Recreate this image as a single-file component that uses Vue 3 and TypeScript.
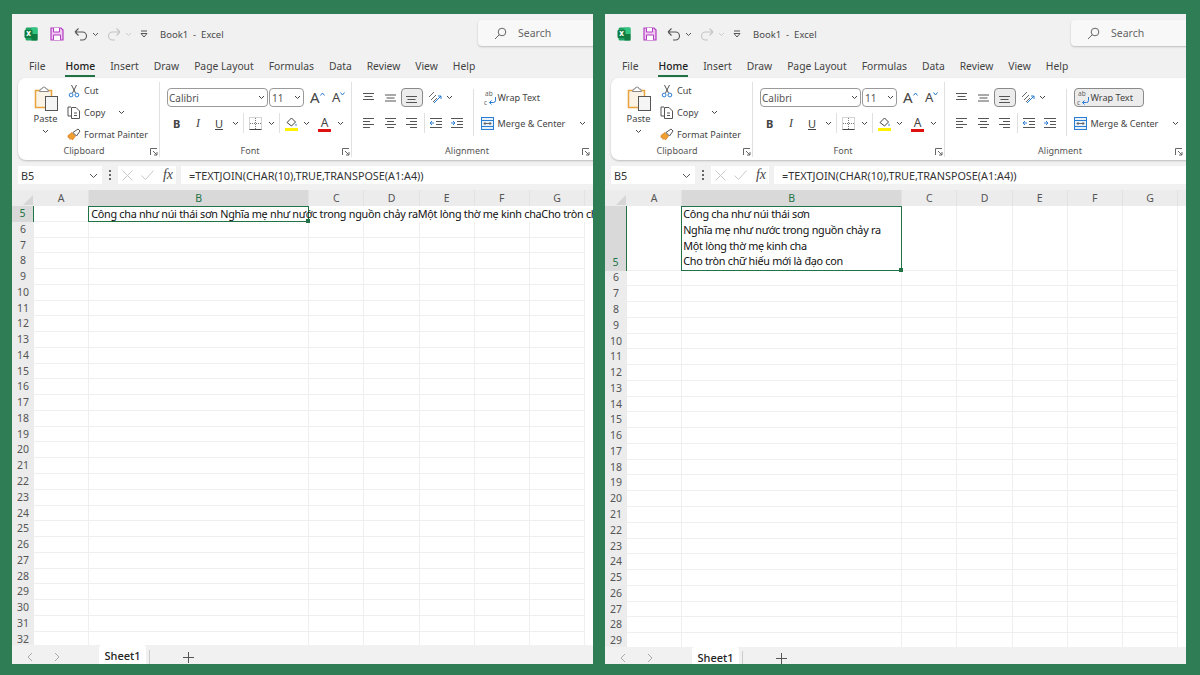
<script setup lang="ts">
interface Win {
  id: string
  wrapped: boolean
  lastRow: number
}
const windows: Win[] = [
  { id: 'before', wrapped: false, lastRow: 32 },
  { id: 'after', wrapped: true, lastRow: 29 },
]
const tabs = ['File', 'Home', 'Insert', 'Draw', 'Page Layout', 'Formulas', 'Data', 'Review', 'View', 'Help']
const cols = ['A', 'B', 'C', 'D', 'E', 'F', 'G']
const lines = [
  'Công cha như núi thái sơn',
  'Nghĩa mẹ như nước trong nguồn chảy ra',
  'Một lòng thờ mẹ kinh cha',
  'Cho tròn chữ hiếu mới là đạo con',
]
const oneLine = 'Công cha như núi thái sơn Nghĩa mẹ như nước trong nguồn chảy raMột lòng thờ mẹ kinh chaCho tròn chữ hiếu mới là đạo con'
function rowsOf(w: Win): number[] {
  const out: number[] = []
  for (let r = 5; r <= w.lastRow; r++) out.push(r)
  return out
}
</script>

<template>
  <div class="page">
    <section v-for="w in windows" :key="w.id" class="win" :class="{ wrapped: w.wrapped }">
      <header class="titlebar">
        <svg class="ic logo" width="14" height="14" viewBox="0 0 14 14">
          <rect x="1.5" y="0.5" width="12" height="13" rx="1.5" fill="#21a366" />
          <rect x="7.5" y="0.5" width="6" height="6.5" fill="#33c481" />
          <rect x="7.5" y="7" width="6" height="6.5" fill="#107c41" />
          <rect x="0.5" y="3" width="8" height="8" rx="1" fill="#107c41" />
          <text x="4.5" y="9.2" text-anchor="middle" font-size="8" font-weight="700" fill="#fff">x</text>
        </svg>
        <svg class="ic save" width="14" height="14" viewBox="0 0 14 14">
          <path d="M1 1h10l2 2v10H1z" fill="#f0c8f2" stroke="#b13fc1" stroke-width="1.2" />
          <path d="M3.5 1v4h6V1" fill="#fff" stroke="#b13fc1" />
          <path d="M3.5 13V8h7v5" fill="#fff" stroke="#b13fc1" />
        </svg>
        <svg class="ic undo" width="14" height="14" viewBox="0 0 14 14" fill="none" stroke="#555" stroke-width="1.1">
          <path d="M1 5h7.500a4 4 0 0 1 0 8H6M1 5l3.500-3.500M1 5l3.500 3.500" />
        </svg>
        <svg class="chev c-undo" width="7" height="5" viewBox="0 0 7 5"><path d="M1 1l2.500 2.500L6 1" fill="none" stroke="#555" /></svg>
        <svg class="ic redo" width="14" height="14" viewBox="0 0 14 14" fill="none" stroke="#c4c4c4" stroke-width="1.1">
          <path d="M13 5H5.500a4 4 0 0 0 0 8H8M13 5L9.500 1.500M13 5L9.500 8.500" />
        </svg>
        <svg class="chev c-redo" width="7" height="5" viewBox="0 0 7 5"><path d="M1 1l2.500 2.500L6 1" fill="none" stroke="#ccc" /></svg>
        <svg class="qat" width="8" height="8" viewBox="0 0 8 8"><path d="M1 1h6" stroke="#555" /><path d="M1 3.500h6L4 7z" fill="none" stroke="#555" /></svg>
        <span class="doc">Book1&nbsp; - &nbsp;Excel</span>
        <div class="search">
          <svg width="13" height="13" viewBox="0 0 13 13" fill="none" stroke="#666"><circle cx="8" cy="5" r="3.800" /><path d="M5.200 7.800L1 12" /></svg>
          <span>Search</span>
        </div>
      </header>

      <nav class="tabs">
        <span v-for="t in tabs" :key="t" class="tab" :class="{ on: t === 'Home' }">{{ t }}</span>
      </nav>

      <div class="ribbon">
        <div class="group g-clip">
          <div class="body clip">
            <div class="paste">
              <svg width="24" height="25" viewBox="0 0 24 25" fill="none">
                <path d="M1.500 4.500h16v17h-16z" fill="#fbf3e6" stroke="#e8a33d" stroke-width="1.500" />
                <path d="M5.500 5.500l1-2.500h1.500a2 2 0 0 1 4 0h1.500l1 2.500z" fill="#fff" stroke="#888" />
                <rect x="11.500" y="10.500" width="12" height="14" fill="#f5f5f5" stroke="#555" />
              </svg>
              <span class="lbl">Paste</span>
              <svg class="chev" width="7" height="5" viewBox="0 0 7 5"><path d="M1 1l2.500 2.500L6 1" fill="none" stroke="#444" /></svg>
            </div>
            <div class="cliplist">
              <div class="clipitem">
                <svg width="13" height="14" viewBox="0 0 13 14" fill="none"><path d="M4 1l4 8M9 1L5 9" stroke="#555" /><circle cx="3.600" cy="11" r="1.900" stroke="#2b7cd3" /><circle cx="9.400" cy="11" r="1.900" stroke="#2b7cd3" /></svg>
                <span class="lbl">Cut</span>
              </div>
              <div class="clipitem">
                <svg width="14" height="13" viewBox="0 0 14 13" fill="none" stroke="#555"><path d="M4 1H1v9h3" /><path d="M4.500 1.500H9l3.500 3.500v7.500h-8z" fill="#fff" /><path d="M7 7h3M7 9.500h3" /></svg>
                <span class="lbl">Copy</span>
                <svg class="chev c-copy" width="7" height="5" viewBox="0 0 7 5"><path d="M1 1l2.500 2.500L6 1" fill="none" stroke="#444" /></svg>
              </div>
              <div class="clipitem">
                <svg width="14" height="13" viewBox="0 0 14 13" fill="none"><path d="M1 7.500l4-3 3.500 3.500-3 4-1.500-1.500L3 11.500 2.500 9.500 1 9.500z" fill="#f0a030" stroke="#d8771c" stroke-width=".7" /><path d="M6 4.500l5-3.500 2 2-3.500 5z" fill="#fff" stroke="#555" /></svg>
                <span class="lbl">Format Painter</span>
              </div>
            </div>
          </div>
          <div class="glabel">Clipboard</div>
          <svg class="launch" width="8" height="8" viewBox="0 0 8 8" fill="none" stroke="#666"><path d="M.5 7V.5H7M3 3l4 4M7 4v3H4" /></svg>
        </div>

        <div class="group g-font">
          <div class="body stack">
            <div class="row1">
              <div class="select font">Calibri<svg class="chev" width="7" height="5" viewBox="0 0 7 5"><path d="M1 1l2.500 2.500L6 1" fill="none" stroke="#444" /></svg></div>
              <div class="select size">11<svg class="chev" width="7" height="5" viewBox="0 0 7 5"><path d="M1 1l2.500 2.500L6 1" fill="none" stroke="#444" /></svg></div>
              <span class="grow">A<svg width="5" height="4" viewBox="0 0 5 4"><path d="M.5 3.500L2.500 1l2 2.500" fill="none" stroke="#2b7cd3" /></svg></span>
              <span class="shrink">A<svg width="5" height="4" viewBox="0 0 5 4"><path d="M.5 .5l2 2.500 2-2.500" fill="none" stroke="#2b7cd3" /></svg></span>
            </div>
            <div class="row2 fmt">
              <b class="f-b">B</b>
              <i class="f-i">I</i>
              <u class="f-u">U</u>
              <svg class="chev f-c1" width="7" height="5" viewBox="0 0 7 5"><path d="M1 1l2.500 2.500L6 1" fill="none" stroke="#444" /></svg>
              <span class="vsep f-s1"></span>
              <svg class="f-bd" width="13" height="13" viewBox="0 0 13 13" fill="none"><rect x=".5" y=".5" width="12" height="12" stroke="#aaa" stroke-dasharray="1 1" /><path d="M6.500 1v11M1 6.500h11" stroke="#777" stroke-dasharray="1 1" /><path d="M.5 12.500h12" stroke="#444" /></svg>
              <svg class="chev f-c2" width="7" height="5" viewBox="0 0 7 5"><path d="M1 1l2.500 2.500L6 1" fill="none" stroke="#444" /></svg>
              <span class="vsep f-s2"></span>
              <svg class="f-fill" width="13" height="15" viewBox="0 0 13 15" fill="none"><path d="M2 6.500L6.500 2l4 4L6.500 10z" fill="#fff" stroke="#444" /><path d="M11 7.500l1 2h-2z" fill="#2b7cd3" /><rect y="12" width="13" height="3" fill="#fff200" /></svg>
              <svg class="chev f-c3" width="7" height="5" viewBox="0 0 7 5"><path d="M1 1l2.500 2.500L6 1" fill="none" stroke="#444" /></svg>
              <span class="f-color">A</span>
              <svg class="chev f-c4" width="7" height="5" viewBox="0 0 7 5"><path d="M1 1l2.500 2.500L6 1" fill="none" stroke="#444" /></svg>
            </div>
          </div>
          <div class="glabel">Font</div>
          <svg class="launch" width="8" height="8" viewBox="0 0 8 8" fill="none" stroke="#666"><path d="M.5 7V.5H7M3 3l4 4M7 4v3H4" /></svg>
        </div>

        <div class="group g-align">
          <div class="body alignbody">
            <div class="stack">
              <div class="row1 alignrow">
                <span class="abtn"><svg width="13" height="12" viewBox="0 0 13 12" stroke="#555"><path d="M1 1.500h11M2.500 4.500h8M1 7.500h11" /></svg></span>
                <span class="abtn"><svg width="13" height="12" viewBox="0 0 13 12" stroke="#555"><path d="M1 3h11M2.500 6h8M1 9h11" /></svg></span>
                <span class="abtn active"><svg width="13" height="12" viewBox="0 0 13 12" stroke="#555"><path d="M1 4.500h11M2.500 7.500h8M1 10.500h11" /></svg></span>
                <span class="abtn wide">
                  <svg width="14" height="13" viewBox="0 0 14 13" fill="none"><path d="M1 6l5-5M3 9l5-5M5 11l4-4" stroke="#666" /><path d="M6 12l7-7M13 5h-3M13 5v3" stroke="#2b7cd3" /></svg>
                  <svg class="chev" width="7" height="5" viewBox="0 0 7 5"><path d="M1 1l2.500 2.500L6 1" fill="none" stroke="#444" /></svg>
                </span>
              </div>
              <div class="row2 alignrow">
                <span class="abtn"><svg width="13" height="13" viewBox="0 0 13 13" stroke="#555"><path d="M1 1.500h11M1 4.500h7M1 7.500h11M1 10.500h7" /></svg></span>
                <span class="abtn"><svg width="13" height="13" viewBox="0 0 13 13" stroke="#555"><path d="M1 1.500h11M3 4.500h7M1 7.500h11M3 10.500h7" /></svg></span>
                <span class="abtn"><svg width="13" height="13" viewBox="0 0 13 13" stroke="#555"><path d="M1 1.500h11M5 4.500h7M1 7.500h11M5 10.500h7" /></svg></span>
                <span class="vsep"></span>
                <span class="abtn i1"><svg width="13" height="13" viewBox="0 0 13 13" fill="none"><path d="M1 1.500h12M7 4.500h6M7 7.500h6M1 10.500h12" stroke="#555" /><path d="M5 6H1M3 4L1 6l2 2" stroke="#2b7cd3" /></svg></span>
                <span class="abtn i2"><svg width="13" height="13" viewBox="0 0 13 13" fill="none"><path d="M1 1.500h12M7 4.500h6M7 7.500h6M1 10.500h12" stroke="#555" /><path d="M1 6h4M3 4l2 2-2 2" stroke="#2b7cd3" /></svg></span>
              </div>
            </div>
            <span class="vsep tall-sep"></span>
            <div class="stack wrapcol">
              <div class="row1 wrapbtn" :class="{ pressed: w.wrapped }">
                <svg width="13" height="15" viewBox="0 0 13 15" fill="none">
                  <text x="1" y="6" font-size="6.500" fill="#666">ab</text>
                  <text x="0" y="14.500" font-size="6.500" fill="#666">c</text>
                  <path d="M11.500 7v3.500a2 2 0 0 1-2 2H5.500M7.500 10.500l-2 2 2 2" stroke="#2b7cd3" />
                </svg>
                <span class="lbl">Wrap Text</span>
              </div>
              <div class="row2 mergebtn">
                <svg width="13" height="13" viewBox="0 0 13 13" fill="none"><rect x=".5" y=".5" width="12" height="12" fill="#e9f2fb" stroke="#2b7cd3" /><path d="M1 3.500h11M1 9.500h11" stroke="#2b7cd3" /><path d="M3 6.500h7M4.500 5L3 6.500 4.500 8M8.500 5L10 6.500 8.500 8" stroke="#444" stroke-width=".8" /></svg>
                <span class="lbl">Merge &amp; Center</span>
                <svg class="chev c-merge" width="7" height="5" viewBox="0 0 7 5"><path d="M1 1l2.500 2.500L6 1" fill="none" stroke="#444" /></svg>
              </div>
            </div>
          </div>
          <div class="glabel">Alignment</div>
          <svg class="launch" width="8" height="8" viewBox="0 0 8 8" fill="none" stroke="#666"><path d="M.5 7V.5H7M3 3l4 4M7 4v3H4" /></svg>
        </div>
      </div>

      <div class="formulabar">
        <div class="namebox">
          <span>B5</span>
          <svg class="chev" width="9" height="6" viewBox="0 0 9 6"><path d="M1 1l3.500 3.500L8 1" fill="none" stroke="#555" /></svg>
        </div>
        <div class="dots"><i></i><i></i><i></i></div>
        <div class="fxgroup">
          <svg width="11" height="11" viewBox="0 0 11 11"><path d="M.5 .5l10 10M10.500 .5l-10 10" stroke="#c8c8c8" fill="none" /></svg>
          <svg width="13" height="10" viewBox="0 0 13 10"><path d="M.5 5.500l4 4 8-9" stroke="#c8c8c8" fill="none" /></svg>
          <em class="fx">fx</em>
        </div>
        <div class="formula">=TEXTJOIN(CHAR(10),TRUE,TRANSPOSE(A1:A4))</div>
      </div>

      <div class="sheet">
        <div class="colhead">
          <div class="corner"><svg width="10" height="10" viewBox="0 0 10 10"><path d="M10 0v10H0z" fill="#d6d6d6" /></svg></div>
          <div v-for="c in cols" :key="c" class="ch" :class="{ sel: c === 'B', wide: c === 'B' }">{{ c }}</div>
        </div>
        <div class="rows">
          <div v-for="r in rowsOf(w)" :key="r" class="row" :class="{ big: r === 5 }">
            <div class="rh" :class="{ sel: r === 5 }">{{ r }}</div>
            <template v-if="r === 5">
              <div class="cell"></div>
              <div class="cell wide selected">
                <template v-if="w.wrapped">
                  <div v-for="l in lines" :key="l" class="line">{{ l }}</div>
                </template>
                <span v-else class="line over">{{ oneLine }}</span>
                <i class="handle"></i>
              </div>
              <template v-if="w.wrapped">
                <div v-for="c in cols.slice(2)" :key="c" class="cell"></div>
              </template>
            </template>
            <template v-else>
              <div v-for="c in cols" :key="c" class="cell" :class="{ wide: c === 'B' }"></div>
            </template>
          </div>
        </div>
      </div>

      <footer class="sheetbar">
        <svg class="nav n1" width="6" height="10" viewBox="0 0 6 10"><path d="M5 1L1 5l4 4" fill="none" stroke="#aaa" /></svg>
        <svg class="nav n2" width="6" height="10" viewBox="0 0 6 10"><path d="M1 1l4 4-4 4" fill="none" stroke="#aaa" /></svg>
        <div class="sheettab">Sheet1</div>
        <span class="tabsep"></span>
        <svg class="plus" width="11" height="11" viewBox="0 0 11 11"><path d="M5.500 0v11M0 5.500h11" stroke="#555" fill="none" /></svg>
      </footer>
    </section>
  </div>
</template>

<style>
html, body { margin: 0; background: #2e7d55; }
</style>

<style scoped>
.page {
  width: 1200px;
  height: 675px;
  box-sizing: border-box;
  padding: 14px 12px 11px;
  display: flex;
  gap: 12px;
  background: #2e7d55;
  font-family: "Noto Sans", "Open Sans", sans-serif;
  color: #444;
  overflow: hidden;
}
.win {
  width: 581px;
  height: 650px;
  background: #f1f1f1;
  display: flex;
  flex-direction: column;
  overflow: hidden;
  flex: none;
}
svg { flex: none; display: block; }
.titlebar {
  height: 40px;
  flex: none;
  display: flex;
  align-items: center;
  padding-left: 12px;
  font-size: 9.500px;
}
.save { margin-left: 12px; }
.undo { margin-left: 10px; }
.c-undo { margin-left: 4px; }
.redo { margin-left: 8px; }
.c-redo { margin-left: 4px; }
.qat { margin-left: 8px; }
.doc { margin-left: 12px; color: #4a4a4a; font-size: 9.500px; white-space: nowrap; }
.search {
  margin-left: auto;
  margin-right: -20px;
  width: 135px;
  height: 26px;
  margin-top: -2px;
  box-sizing: border-box;
  background: #f8f8f8;
  border-radius: 4px;
  box-shadow: 0 1px 2px rgba(0, 0, 0, .22);
  display: flex;
  align-items: center;
  gap: 11px;
  padding-left: 16px;
  font-size: 10.500px;
  color: #666;
}
.tabs {
  height: 24px;
  flex: none;
  display: flex;
  align-items: center;
  gap: 15px;
  padding-left: 17px;
  font-size: 10.300px;
  color: #444;
}
.tab { position: relative; white-space: nowrap; }
.tab:first-child { margin-right: 5px; }
.tab.on { font-weight: 500; color: #222; }
.tab.on::after {
  content: "";
  position: absolute;
  left: 0;
  right: 0;
  bottom: -4px;
  height: 2px;
  background: #217346;
}
.ribbon {
  height: 82px;
  flex: none;
  margin-left: 6px;
  margin-right: -12px;
  background: #fff;
  border-radius: 8px 0 0 8px;
  box-shadow: 0 1px 2px rgba(0, 0, 0, .22);
  display: flex;
  color: #444;
}
.group {
  position: relative;
  display: flex;
  flex-direction: column;
  height: 82px;
  flex: none;
}
.group::after {
  content: "";
  position: absolute;
  right: 0;
  top: 4px;
  bottom: 3px;
  width: 1px;
  background: #e0e0e0;
}
.g-clip { width: 142px; }
.g-font { width: 192px; }
.g-align { width: 240px; }
.g-align::after { display: none; }
.body { flex: 1; min-height: 0; }
.glabel {
  height: 18px;
  line-height: 18px;
  text-align: center;
  font-size: 9px;
  color: #555;
  padding-right: 10px;
}
.g-font .glabel { padding-right: 12px; }
.launch { position: absolute; right: 2px; bottom: 4px; }
.lbl { white-space: nowrap; font-size: 9.100px; color: #444; }
.clip { display: flex; padding-top: 2px; }
.paste {
  width: 49px;
  padding-left: 6px;
  box-sizing: border-box;
  display: flex;
  flex-direction: column;
  align-items: center;
  padding-top: 6px;
}
.paste .lbl { margin-top: 1px; line-height: 14px; font-size: 9.300px; }
.paste .chev { margin-top: 3px; }
.cliplist { display: flex; flex-direction: column; }
.clipitem {
  height: 21.800px;
  flex: none;
  display: flex;
  align-items: center;
  gap: 3px;
}
.clipitem > svg:first-child { width: 14px; }
.c-copy { margin-left: 10px; width: 7px; }
.stack { display: flex; flex-direction: column; padding-top: 10px; gap: 6px; }
.row1 { height: 19px; display: flex; align-items: center; }
.row2 { height: 20px; display: flex; align-items: center; }
.g-font .row1 { padding-left: 7px; }
.select {
  height: 19px;
  box-sizing: border-box;
  border: 1px solid #9a9a9a;
  border-radius: 4px;
  background: #fff;
  display: flex;
  align-items: center;
  justify-content: space-between;
  padding: 0 2px 0 1px;
  font-size: 10px;
  color: #555;
}
.font { width: 101px; }
.size { width: 35px; margin-left: 1px; padding-left: 2px; }
.grow, .shrink { display: flex; align-items: flex-start; color: #444; }
.grow { font-size: 15px; margin-left: 6px; line-height: 19px; width: 18px; }
.shrink { font-size: 13px; margin-left: 4px; line-height: 19px; }
.grow svg, .shrink svg { margin-top: 4px; }
.fmt { position: relative; font-size: 11px; color: #444; }
.fmt > * { position: absolute; }
.f-b { left: 13px; font-family: "Noto Sans", sans-serif; }
.f-i { left: 36px; font-family: "Liberation Serif", serif; font-size: 12px; }
.f-u { left: 55px; }
.f-c1 { left: 72px; }
.f-s1 { left: 83px; }
.f-bd { left: 89px; }
.f-c2 { left: 108px; }
.f-s2 { left: 119px; }
.f-fill { left: 125px; }
.f-c3 { left: 143px; }
.f-color {
  left: 158px;
  font-size: 12px;
  line-height: 13px;
  top: 3px;
  width: 13px;
  text-align: center;
  border-bottom: 3px solid #e01010;
}
.f-c4 { left: 177px; }
.vsep { width: 1px; height: 20px; background: #e0e0e0; display: block; }
.alignbody { display: flex; padding-left: 6px; }
.alignrow { gap: 0; }
.abtn {
  width: 21.500px;
  height: 19px;
  box-sizing: border-box;
  display: flex;
  align-items: center;
  justify-content: center;
  flex: none;
}
.abtn.active { background: #ececec; border: 1px solid #8a8a8a; border-radius: 4px; }
.abtn.wide { width: 32px; justify-content: flex-start; gap: 4px; padding-left: 5px; }
.alignrow .vsep { margin: 0 0 0 1px; }
.tall-sep { height: 47px; margin: 11px 0 0 5px; }
.wrapcol { padding-left: 7px; }
.wrapbtn {
  box-sizing: border-box;
  gap: 1px;
  padding-left: 2px;
  width: 70px;
  border: 1px solid transparent;
  border-radius: 4px;
}
.wrapbtn.pressed { background: #ececec; border-color: #8a8a8a; }
.mergebtn { gap: 4px; }
.c-merge { margin-left: 10px; }
.formulabar {
  height: 18px;
  flex: none;
  margin-top: 6px;
  padding-left: 6px;
  display: flex;
  align-items: stretch;
  font-size: 10.800px;
  color: #333;
}
.namebox {
  width: 84px;
  background: #fff;
  display: flex;
  align-items: center;
  justify-content: space-between;
  padding: 1px 4px 0 3px;
  box-sizing: border-box;
}
.dots { width: 16px; display: flex; flex-direction: column; align-items: center; justify-content: center; gap: 2px; }
.dots i { width: 2px; height: 2px; background: #666; display: block; }
.fxgroup {
  width: 58px;
  background: #fff;
  display: flex;
  align-items: center;
  justify-content: space-between;
  padding: 0 3px 0 4px;
  box-sizing: border-box;
}
.fx { font-family: "Liberation Serif", serif; font-size: 14px; color: #444; }
.formula {
  flex: 1;
  margin-left: 5px;
  background: #fff;
  padding-left: 8px;
  line-height: 19px;
  white-space: nowrap;
}
.sheet {
  margin-top: 6px;
  flex: 1;
  min-height: 0;
  display: flex;
  flex-direction: column;
  background: #fff;
  overflow: hidden;
}
.colhead { height: 16px; flex: none; display: flex; background: #ececec; }
.corner { width: 22px; flex: none; display: flex; justify-content: flex-end; align-items: flex-end; box-sizing: border-box; padding: 0 1px 1px 0; }
.ch {
  width: 55.200px;
  flex: none;
  text-align: center;
  font-size: 10.500px;
  line-height: 16px;
  color: #555;
  box-sizing: border-box;
  border-right: 1px solid #e2e2e2;
}
.ch.wide { width: 220px; }
.ch.sel { background: #d9d9d9; color: #217346; }
.rows { flex: 1; min-height: 0; overflow: hidden; }
.row { height: 15.780px; display: flex; box-sizing: border-box; position: relative; }
.wrapped .row.big { height: 64.500px; }
.rh {
  width: 22px;
  flex: none;
  background: #ececec;
  font-size: 10.500px;
  line-height: 15.780px;
  color: #555;
  display: flex;
  align-items: flex-end;
  justify-content: center;
  box-sizing: border-box;
  padding-top: 1px;
  position: relative;
}
.rh.sel { background: #d9d9d9; color: #217346; border-right: 1px solid #217346; }
.cell {
  width: 55.200px;
  flex: none;
  box-sizing: border-box;
  border-right: 1px solid #efefef;
  border-bottom: 1px solid #efefef;
}
.cell.wide { width: 220px; }
.selected {
  position: relative;
  border-color: transparent;
  padding: 0 0 0 2px;
  font-size: 10.800px;
  letter-spacing: -0.270px;
  color: #111;
}
.wrapped .selected { padding-left: 1px; }
.selected::after {
  content: "";
  position: absolute;
  inset: 0 -1px -1px -1px;
  border: 1.500px solid #217346;
  pointer-events: none;
}
.handle {
  position: absolute;
  right: -2px;
  bottom: -2px;
  width: 4px;
  height: 4px;
  background: #217346;
  z-index: 2;
}
.line { display: block; height: 15.780px; line-height: 15.780px; white-space: nowrap; }
.over { position: relative; z-index: 1; }
.sheetbar {
  height: 19px;
  flex: none;
  background: #f1f1f1;
  display: flex;
  align-items: center;
  padding-top: 5px;
  box-sizing: border-box;
}
.wrapped .sheetbar { height: 17px; }
.n1 { margin-left: 15px; }
.n2 { margin-left: 21px; }
.sheettab {
  margin-left: 39px;
  width: 47px;
  align-self: stretch;
  margin-top: -5px;
  background: #fff;
  border-radius: 3px 3px 0 0;
  text-align: center;
  font-size: 11px;
  font-weight: 500;
  line-height: 22px;
  color: #222;
}
.wrapped .sheettab { line-height: 21px; }
.tabsep { width: 1px; height: 14px; background: #ccc; margin-left: 3px; }
.plus { margin-left: 33px; }
</style>
